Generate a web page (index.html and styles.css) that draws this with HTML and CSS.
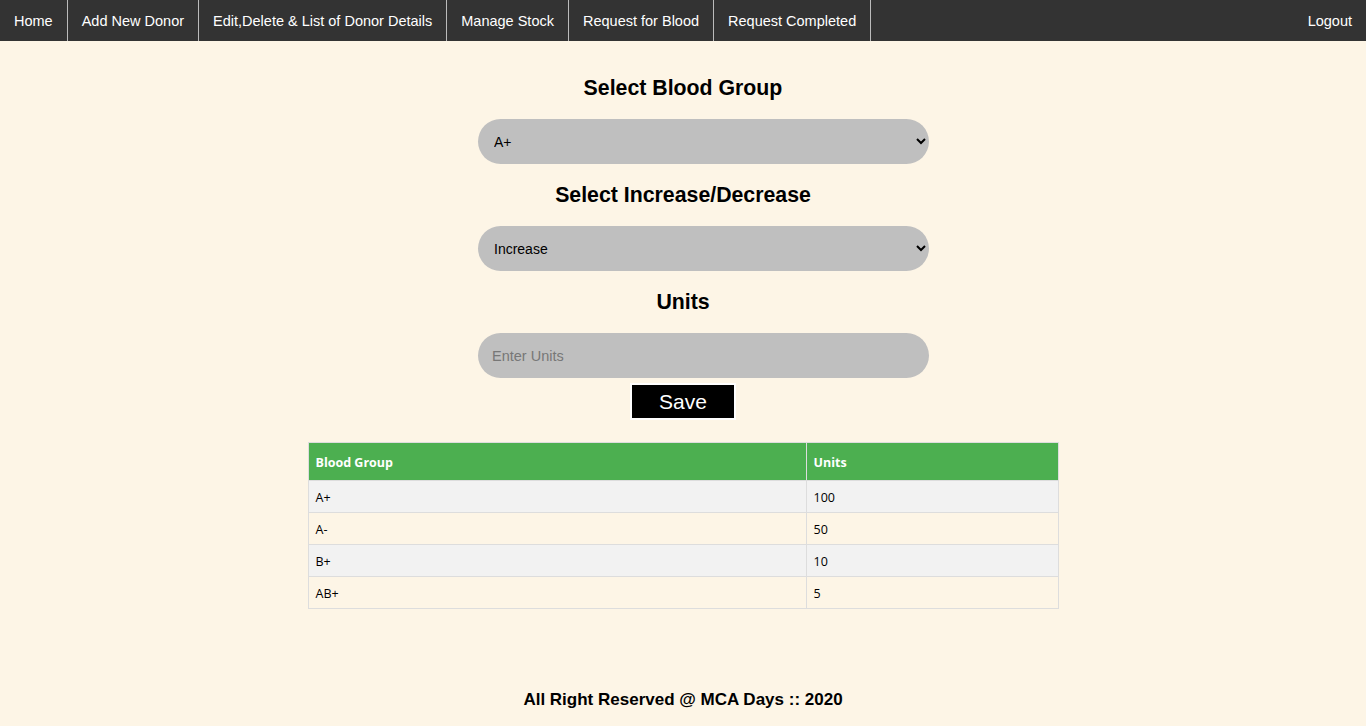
FILE: index.html
```html
<!DOCTYPE html>
<html>
<head>
<meta charset="utf-8">
<title>Manage Stock</title>
<link rel="stylesheet" href="styles.css">
</head>
<body>
<nav class="topnav">
  <a class="nav-item" href="#">Home</a>
  <a class="nav-item" href="#">Add New Donor</a>
  <a class="nav-item" href="#">Edit,Delete &amp; List of Donor Details</a>
  <a class="nav-item" href="#">Manage Stock</a>
  <a class="nav-item" href="#">Request for Blood</a>
  <a class="nav-item" href="#">Request Completed</a>
  <a class="nav-item nav-right" href="#">Logout</a>
</nav>
<main class="content">
  <form class="stock-form">
    <h2 class="field-title">Select Blood Group</h2>
    <select class="pill">
      <option>A+</option><option>A-</option><option>B+</option><option>B-</option>
      <option>O+</option><option>O-</option><option>AB+</option><option>AB-</option>
    </select>
    <h2 class="field-title">Select Increase/Decrease</h2>
    <select class="pill">
      <option>Increase</option><option>Decrease</option>
    </select>
    <h2 class="field-title">Units</h2>
    <input class="pill pill-input" type="text" placeholder="Enter Units">
    <button class="save-btn" type="button">Save</button>
  </form>
  <table class="stock-table">
    <thead>
      <tr><th>Blood Group</th><th class="col-units">Units</th></tr>
    </thead>
    <tbody>
      <tr><td>A+</td><td>100</td></tr>
      <tr><td>A-</td><td>50</td></tr>
      <tr><td>B+</td><td>10</td></tr>
      <tr><td>AB+</td><td>5</td></tr>
    </tbody>
  </table>
</main>
<footer class="footer">All Right Reserved @ MCA Days :: 2020</footer>
</body>
</html>
```
FILE: styles.css
```css
html, body {
  margin: 0;
  padding: 0;
}
body {
  background: #fdf5e6;
  font-family: "Liberation Sans", Arial, sans-serif;
  color: #000;
}
.topnav {
  display: flex;
  background: #333;
  height: 41px;
}
.nav-item {
  display: block;
  color: #fff;
  text-decoration: none;
  font-size: 14.5px;
  line-height: 41px;
  padding: 1px 14px 0 14px;
  height: 40px;
  border-right: 1px solid #bbb;
}
.nav-right {
  margin-left: auto;
  border-right: none;
}
.content {
  display: flex;
  flex-direction: column;
  align-items: center;
  padding-top: 35px;
}
.stock-form {
  display: flex;
  flex-direction: column;
  align-items: center;
  width: 100%;
}
.field-title {
  font-size: 21.3px;
  font-weight: bold;
  line-height: 24px;
  margin: 0 0 19px 0;
}
.pill {
  width: 451px;
  height: 45px;
  border: none;
  border-radius: 23px;
  background-color: #bfbfbf;
  font-family: "Liberation Sans", Arial, sans-serif;
  font-size: 14px;
  color: #000;
  padding: 0 10px 0 12px;
  margin: 0 0 19px 41px;
  box-sizing: border-box;
  outline: none;
}
.pill-input {
  padding-left: 14px;
  font-size: 14.5px;
  margin-bottom: 5px;
}
.pill-input::placeholder {
  color: #777;
}
.save-btn {
  width: 106px;
  height: 37px;
  background: #000;
  color: #fff;
  border: 2px solid #fff;
  font-family: "Liberation Sans", Arial, sans-serif;
  font-size: 21px;
  padding: 0;
}
.stock-table {
  width: 751px;
  margin-top: 22px;
  border-collapse: collapse;
  font-family: "Open Sans", "DejaVu Sans", sans-serif;
  font-size: 12.5px;
}
.stock-table th,
.stock-table td {
  border: 1px solid #ddd;
  text-align: left;
  padding: 1px 7px 0 7px;
  height: 32px;
  box-sizing: border-box;
}
.stock-table th {
  background: #4caf50;
  color: #fff;
  font-weight: bold;
  height: 38px;
}
.stock-table .col-units {
  width: 252px;
}
.stock-table tbody tr:nth-child(odd) {
  background: #f2f2f2;
}
.footer {
  text-align: center;
  font-weight: bold;
  font-size: 17px;
  margin-top: 81px;
  padding-bottom: 16px;
}
```
